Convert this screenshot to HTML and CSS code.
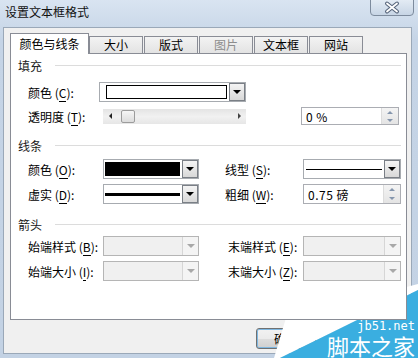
FILE: index.html
```html
<!DOCTYPE html>
<html lang="zh-CN">
<head>
  <meta charset="UTF-8" />
  <title>设置文本框格式</title>
  <link rel="stylesheet" href="styles.css">
</head>
<body>
  <div class="window">
    <div class="titlebar">
      <span class="title">设置文本框格式</span>
      <div class="close">
        <svg width="44" height="17" viewBox="0 0 44 17">
          <path d="M17 4.5 L27 12.5 M27 4.5 L17 12.5" stroke="#56647a" stroke-width="4" stroke-linecap="round"/>
          <path d="M17 4.5 L27 12.5 M27 4.5 L17 12.5" stroke="#fff" stroke-width="1.8" stroke-linecap="round"/>
        </svg>
      </div>
    </div>

    <div class="client">
      <div class="tabs">
        <div class="tab active">颜色与线条</div>
        <div class="tab">大小</div>
        <div class="tab">版式</div>
        <div class="tab disabled">图片</div>
        <div class="tab">文本框</div>
        <div class="tab">网站</div>
      </div>

      <div class="panel">
        <div class="sec">填充</div>
        <div class="row r1">
          <span class="lbl narrow">颜色 (<u>C</u>):</span>
          <div class="combo wide">
            <div class="swatch white"></div>
            <div class="drop"><i class="arrow"></i></div>
          </div>
        </div>
        <div class="row r2">
          <span class="lbl">透明度 (<u>T</u>):</span>
          <div class="scroll">
            <i class="sarrow left"></i>
            <div class="thumb"></div>
            <i class="sarrow right"></i>
          </div>
          <div class="spin pct">
            <span class="val">0 %</span>
            <div class="spinbtns"><i class="up"></i><i class="down"></i></div>
          </div>
        </div>

        <div class="sec s2">线条</div>
        <div class="row r3">
          <span class="lbl">颜色 (<u>O</u>):</span>
          <div class="combo mid">
            <div class="swatch black"></div>
            <div class="drop"><i class="arrow"></i></div>
          </div>
          <span class="lbl-r">线型 (<u>S</u>):</span>
          <div class="combo right">
            <div class="line thin"></div>
            <div class="drop"><i class="arrow"></i></div>
          </div>
        </div>
        <div class="row r4">
          <span class="lbl">虚实 (<u>D</u>):</span>
          <div class="combo mid">
            <div class="line thick"></div>
            <div class="drop"><i class="arrow"></i></div>
          </div>
          <span class="lbl-r">粗细 (<u>W</u>):</span>
          <div class="spin">
            <span class="val">0.75 磅</span>
            <div class="spinbtns"><i class="up"></i><i class="down"></i></div>
          </div>
        </div>

        <div class="sec s3">箭头</div>
        <div class="row r5 arrows">
          <span class="lbl">始端样式 (<u>B</u>):</span>
          <div class="combo mid off"><div class="drop"><i class="arrow"></i></div></div>
          <span class="lbl-r">末端样式 (<u>E</u>):</span>
          <div class="combo right off"><div class="drop"><i class="arrow"></i></div></div>
        </div>
        <div class="row r6 arrows">
          <span class="lbl">始端大小 (<u>I</u>):</span>
          <div class="combo mid off"><div class="drop"><i class="arrow"></i></div></div>
          <span class="lbl-r">末端大小 (<u>Z</u>):</span>
          <div class="combo right off"><div class="drop"><i class="arrow"></i></div></div>
        </div>
      </div>

      <div class="footer">
        <button class="btn">确定</button>
      </div>
    </div>

    <!-- 水印 -->
    <svg class="watermark" width="418" height="358" viewBox="0 0 418 358">
      <polygon points="274,358 286,318 418,284 418,290 280,358" fill="#fff"/>
      <polygon points="280,358 418,290 418,358" fill="#3aaee0"/>
      <text x="415" y="330" text-anchor="end" class="wm-url">jb51.net</text>
      <text x="415" y="355" text-anchor="end" class="wm-name">脚本之家</text>
    </svg>
  </div>
</body>
</html>
```

FILE: styles.css
```css
body {
  margin: 0;
  font-family: "Noto Sans CJK SC", "Liberation Sans", sans-serif;
  font-size: 12px;
  color: #000;
}
.window {
  position: relative;
  width: 418px;
  height: 358px;
  overflow: hidden;
  background: linear-gradient(#d9e4f1, #c5d4e6 40px, #c3d2e4);
}
.titlebar {
  position: relative;
  height: 27px;
}
.title {
  position: absolute;
  left: 5px;
  top: 4px;
  line-height: 16px;
  color: #111;
}
.close {
  position: absolute;
  left: 370px;
  top: -1px;
  width: 44px;
  height: 17px;
  box-sizing: border-box;
  border: 1px solid #7d8b9d;
  border-radius: 0 0 4px 4px;
  background: linear-gradient(#e3ebf4, #c7d5e5);
}
.close svg {
  position: absolute;
  left: -1px;
  top: -1px;
}

/* 客户区 */
.client {
  margin: 0 6px 0 3px;
  height: 327px;
  box-sizing: border-box;
  border: 1px solid #9aa8b8;
  background: #f0f0f0;
}
.tabs {
  display: flex;
  align-items: flex-end;
  height: 20px;
  margin-top: 5px;
  padding-left: 6px;
  position: relative;
  z-index: 2;
}
.tab {
  height: 17px;
  box-sizing: border-box;
  border: 1px solid #898c95;
  border-bottom: none;
  background: linear-gradient(#f3f3f3, #e3e3e3);
  text-align: center;
  line-height: 16px;
  width: 54px;
}
.tab + .tab {
  margin-left: 1px;
}
.tab.active {
  width: 79px;
  height: 21px;
  margin-bottom: -1px;
  background: #fff;
  line-height: 20px;
}
.tab.active + .tab {
  margin-left: 0;
}
.tab.disabled {
  color: #8d8d8d;
}
.panel {
  position: relative;
  z-index: 1;
  margin-left: 6px;
  width: 397px;
  height: 267px;
  box-sizing: border-box;
  border: 1px solid #898c95;
  background: #fff;
  padding-top: 3px;
}

/* 分组标题 */
.sec {
  display: flex;
  align-items: center;
  height: 16px;
  padding-left: 7px;
  color: #1a1a1a;
}
.sec::after {
  content: "";
  flex: 1;
  margin: 1px 5px 0 13px;
  border-top: 1px solid #dcdcdc;
}
.s2, .s3 {
  margin-top: 12px;
}

.row {
  display: flex;
  align-items: center;
  padding-left: 17px;
}
.r1 { margin-top: 9px; }
.r2 { margin-top: 5px; }
.r3 { margin-top: 6px; }
.r4 { margin-top: 5px; }
.r5 { margin-top: 4px; }
.r6 { margin-top: 5px; }

.lbl {
  width: 75px;
  white-space: nowrap;
}
.lbl.narrow {
  width: 71px;
}
.lbl-r {
  width: 78px;
  margin-left: 26px;
  white-space: nowrap;
}
.arrows .lbl-r {
  width: 75px;
  margin-left: 29px;
}
u {
  text-decoration: none;
  border-bottom: 1px solid #000;
}

/* 下拉框 */
.combo {
  display: flex;
  align-items: center;
  height: 20px;
  box-sizing: border-box;
  border: 1px solid #a7abb0;
  background: #fff;
}
.combo.wide { width: 147px; }
.combo.mid { width: 96px; }
.combo.right { width: 98px; }
.swatch {
  flex: 1;
  height: 14px;
  margin: 0 2px 0 6px;
  box-sizing: border-box;
  border: 1px solid #000;
}
.swatch.black {
  background: #000;
  margin-left: 1px;
}
.line {
  flex: 1;
  margin: 0 2px 0 1px;
  background: #000;
}
.line.thin { height: 1px; margin-left: 2px; }
.line.thick { height: 3px; }
.drop {
  width: 16px;
  height: 18px;
  margin-left: auto;
  box-sizing: border-box;
  border: 1px solid #7a7f86;
  background: linear-gradient(#f4f4f4, #d8d8d8);
  display: flex;
  align-items: center;
  justify-content: center;
}
.arrow {
  width: 0;
  height: 0;
  border-left: 4px solid transparent;
  border-right: 4px solid transparent;
  border-top: 4px solid #000;
}
.combo.off {
  background: #f0f0f0;
  border-color: #b5b5b5;
}
.combo.off .drop {
  border: none;
  border-left: 1px solid #d6d6d6;
  background: #f4f4f4;
}
.combo.off .arrow {
  border-top-color: #a8a8a8;
}

/* 滚动条 */
.scroll {
  position: relative;
  width: 143px;
  height: 15px;
  background: linear-gradient(#e4e4e4, #f1f1f1 50%, #e6e6e6);
}
.sarrow {
  position: absolute;
  top: 4px;
  width: 0;
  height: 0;
  border-top: 3px solid transparent;
  border-bottom: 3px solid transparent;
}
.sarrow.left {
  left: 6px;
  border-right: 3px solid #222;
}
.sarrow.right {
  right: 5px;
  border-left: 3px solid #444;
}
.thumb {
  position: absolute;
  left: 18px;
  top: 1px;
  width: 14px;
  height: 13px;
  box-sizing: border-box;
  border: 1px solid #9c9c9c;
  border-radius: 2px;
  background: linear-gradient(#f6f6f6, #dcdcdc);
}

/* 数值框 */
.spin {
  display: flex;
  align-items: center;
  width: 98px;
  height: 20px;
  box-sizing: border-box;
  border: 1px solid #abadb3;
  background: #fff;
}
.spin.pct {
  height: 18px;
  margin-left: 55px;
}
.val {
  flex: 1;
  padding-left: 4px;
  letter-spacing: 0.5px;
}
.spinbtns {
  width: 16px;
  height: 100%;
  display: flex;
  flex-direction: column;
  align-items: center;
  justify-content: space-around;
  background: linear-gradient(#f4f4f4, #e4e4e4);
  border-left: 1px solid #dcdcdc;
}
.spinbtns i {
  width: 0;
  height: 0;
  border-left: 3px solid transparent;
  border-right: 3px solid transparent;
}
.spinbtns .up { border-bottom: 3px solid #8596ad; }
.spinbtns .down { border-top: 3px solid #8596ad; }

/* 底部 */
.footer {
  padding: 8px 0 0 252px;
}
.btn {
  width: 60px;
  height: 21px;
  border: 1px solid #707070;
  border-radius: 3px;
  background: linear-gradient(#f2f2f2, #ebebeb 50%, #dddddd 51%, #cfcfcf);
  font-family: "Noto Sans CJK SC", sans-serif;
  font-size: 12px;
  padding: 0;
  box-shadow: inset 0 0 0 1px #7fb7e0;
}

.watermark {
  position: absolute;
  left: 0;
  top: 0;
  pointer-events: none;
}
.wm-url {
  font-family: "DejaVu Sans Mono", monospace;
  font-size: 12px;
  fill: #fff;
}
.wm-name {
  font-family: "Noto Sans CJK SC", sans-serif;
  font-size: 22px;
  fill: #fff;
}
```
